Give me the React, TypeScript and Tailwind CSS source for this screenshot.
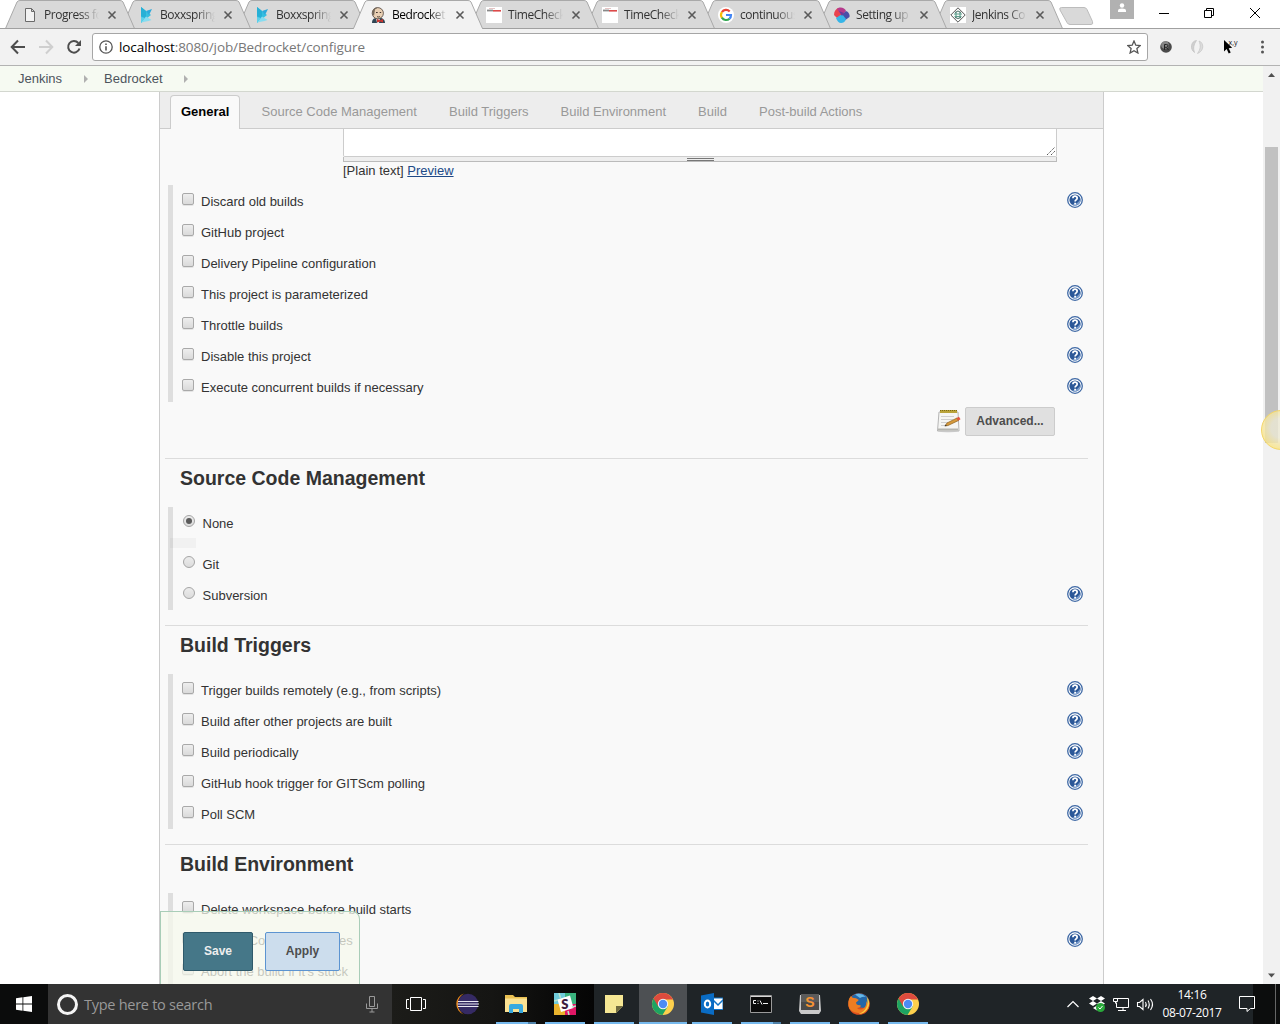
import React from 'react';

type IconProps = { children: React.ReactNode; w: number; h: number; className?: string };

function Svg({ children, w, h, className = '' }: IconProps) {
  return (
    <svg width={w} height={h} viewBox={`0 0 ${w} ${h}`} fill="none" className={`shrink-0 ${className}`}>
      {children}
    </svg>
  );
}

/* ---------- favicons ---------- */

const DocIcon = () => (
  <Svg w={16} h={16}>
    <path d="M3.500 1.500h6l3 3v10h-9z M9.500 1.500v3h3" fill="#f2f2f2" stroke="#6a6a6a" />
  </Svg>
);
const BoxxIcon = () => (
  <Svg w={16} h={16}>
    <path d="M3 0l10 8-10 8z" fill="#35bfe0" />
    <path d="M3 0l5 4v8l-5-3z" fill="#27b0d6" />
    <path d="M8 4l6-2-3 6z" fill="#2ca9dc" />
    <path d="M3 15.500l5-6 5.500 3.500-3 1z" fill="#86dcf0" />
    <path d="M3 15.500V10l4 1z" fill="#5fd0ea" />
  </Svg>
);
const ButlerIcon = () => (
  <Svg w={16} h={16}>
    <path d="M2 16c0-4 2-5 5-5h3c3 0 5 2 5 5z" fill="#2f4553" />
    <path d="M6 11h4l-1 5H7z" fill="#e8e8e8" />
    <ellipse cx="7.800" cy="6.200" rx="5.600" ry="5.600" fill="#e9d0b4" stroke="#4d4039" strokeWidth=".8" />
    <path d="M2.500 7C1.500 2 5 .3 8 .4L5 2.500 4 9z" fill="#75695c" />
    <path d="M6 5.500h1.700M9.700 5.500h1.500M7 9.500c1 .7 2 .6 3 0" stroke="#40342e" />
    <path d="M7 12l3 1.300L13 12v3.500l-3-1-3 1z" fill="#c9352f" />
  </Svg>
);
const TimeIcon = () => (
  <Svg w={16} h={16}>
    <path d="M0 0h16v16H0z" fill="#fff" />
    <path d="M1 3.500h6" stroke="#888" strokeWidth="1.800" />
    <path d="M7 3.800h8" stroke="#dc4a4a" strokeWidth="1.600" />
    <path d="M3 1.500h6" stroke="#e6c4c4" />
  </Svg>
);
const GoogleIcon = () => (
  <Svg w={16} h={16}>
    <circle cx="8" cy="8" r="8" fill="#fff" />
    <path d="M3.900 5.200A5 5 0 0 1 11.700 4.400" stroke="#ea4335" strokeWidth="2.200" />
    <path d="M3.900 10.800a5 5 0 0 1 0-5.600" stroke="#fbbc05" strokeWidth="2.200" />
    <path d="M11.500 11.700a5 5 0 0 1-7.600-1" stroke="#34a853" strokeWidth="2.200" />
    <path d="M8 8h5a5 5 0 0 1-1.600 3.800" stroke="#4285f4" strokeWidth="2.200" />
  </Svg>
);
const SwirlIcon = () => (
  <Svg w={16} h={16}>
    <path d="M0 8C0 4 2 2 4 1l5 6-5 5z" fill="#e9434e" />
    <path d="M3 2c3-3 8-1 9 2L8 9z" fill="#b53a8c" />
    <path d="M8 8l4-4c3 1 4 4 3.500 6L10 14z" fill="#4a4fa8" />
    <path d="M2 11l6-4 4 5c-1 3-3 4-5 4s-4-2-5-5z" fill="#35b5e8" />
    <path d="M5 4l5 2-2 3z" fill="#6e3a98" />
  </Svg>
);
const DiamondIcon = () => (
  <Svg w={16} h={16}>
    <path d="M0 0h16v16H0z" fill="#fff" />
    <path d="M8 .8L15.200 8 8 15.200.8 8z" fill="#f8faf9" stroke="#555" />
    <path d="M4 7h8M4.500 9.500h7M6 5v6M10 5v6" stroke="#5f9f8d" strokeWidth="1.200" />
    <path d="M5 5.500q3-3 6 0M5 10.500q3 2 6 0" stroke="#4b6f66" />
  </Svg>
);

/* ---------- browser window ---------- */

type BrowserTab = { title: string; icon: React.ReactNode; z: string; active?: boolean };

const browserTabs: BrowserTab[] = [
  { title: 'Progress fo', icon: <DocIcon />, z: 'z-[9]' },
  { title: 'Boxxspring', icon: <BoxxIcon />, z: 'z-[8]' },
  { title: 'Boxxspring', icon: <BoxxIcon />, z: 'z-[7]' },
  { title: 'Bedrocket', icon: <ButlerIcon />, z: 'z-20', active: true },
  { title: 'TimeCheck', icon: <TimeIcon />, z: 'z-[5]' },
  { title: 'TimeCheck', icon: <TimeIcon />, z: 'z-[4]' },
  { title: 'continuous', icon: <GoogleIcon />, z: 'z-[3]' },
  { title: 'Setting up', icon: <SwirlIcon />, z: 'z-[2]' },
  { title: 'Jenkins Co', icon: <DiamondIcon />, z: 'z-[1]' },
];

function ChromeTab({ title, icon, z, active }: BrowserTab) {
  const fill = active ? '#f2f2f2' : '#d9d9d9';
  return (
    <div className={`relative flex h-[29px] w-[116px] shrink-0 items-center pl-4 ${z}`}>
      <svg width="130" height="29" className="absolute top-0 left-[-1px]" fill="none">
        <path d="M0.500 28.500L12 2Q13 .5 15 .5H115Q117 .5 118 2L129.500 28.500" fill={fill} stroke="#a9a9a9" />
        <path d={active ? 'M1 28.500H129' : 'M0 28.500H130'} stroke={active ? '#f2f2f2' : '#a0a0a0'} />
      </svg>
      <span className="relative flex">{icon}</span>
      <span
        className={`relative ml-1.5 w-[55px] text-[12px] leading-4 tracking-[-0.45px] whitespace-nowrap [mask-image:linear-gradient(to_right,black_66%,transparent)] ${active ? 'text-black' : 'text-[#333]'}`}
      >
        {title}
      </span>
      <Svg w={10} h={10} className="relative ml-2">
        <path d="M1.500 1.500l7 7M8.500 1.500l-7 7" stroke="#5a5a5a" strokeWidth="1.600" />
      </Svg>
    </div>
  );
}

function TabStrip() {
  return (
    <div className="flex h-[29px] shrink-0 bg-white shadow-[inset_0_-1px_0_#a0a0a0]">
      <div className="flex pl-1.5">
        {browserTabs.map((t, i) => (
          <ChromeTab key={i} {...t} />
        ))}
      </div>
      <Svg w={36} h={29} className="ml-2">
        <path d="M3.500 7.500H26q2 0 3 2l5.500 12q1 3-1.500 3H12q-2 0-3-2L2 10q-1-2.500 1.500-2.500z" fill="#d9d9d9" stroke="#bcbcbc" />
      </Svg>
      <Svg w={24} h={19} className="ml-4">
        <path d="M0 0h24v19H0z" fill="#b1b1b1" />
        <circle cx="12" cy="5.500" r="2.200" fill="#fff" />
        <path d="M8 12v-1.500q0-2 4-2t4 2V12z" fill="#fff" />
      </Svg>
      <Svg w={126} h={29} className="ml-5">
        <path d="M5 13.500h10" stroke="#000" />
        <path d="M50.500 10.500h7v7h-7zM52.500 10.500v-2h7v7h-2M96 8l10 10M106 8L96 18" stroke="#000" />
      </Svg>
    </div>
  );
}

function Toolbar() {
  return (
    <div className="flex h-[37px] shrink-0 items-center border-b border-[#b3b3b3] bg-[#f2f2f2]">
      <Svg w={92} h={36}>
        <path d="M25 18H12M18 11.500L11.700 18l6.300 6.500" stroke="#4d4d4d" strokeWidth="2" />
        <path d="M39 18h13M46 11.500l6.300 6.500-6.300 6.500" stroke="#cfcfcf" strokeWidth="2" />
        <path d="M78.300 14A5.800 5.800 0 1 0 79.500 19.500" stroke="#4d4d4d" strokeWidth="2" />
        <path d="M81 11v6h-6z" fill="#4d4d4d" />
      </Svg>
      <div className="flex h-7 w-[1056px] items-center rounded-[3px] border border-[#a6a6a6] bg-white">
        <Svg w={14} h={14} className="ml-[6px]">
          <circle cx="7" cy="7" r="6.200" stroke="#555" strokeWidth="1.300" />
          <path d="M7 6.200v4.300M7 3.500V5" stroke="#555" strokeWidth="1.600" />
        </Svg>
        <span className="ml-[6px] text-[13.5px] tracking-[-0.09px] whitespace-nowrap text-[#777]">
          <span className="text-black">localhost</span>:8080/job/Bedrocket/configure
        </span>
        <Svg w={14} h={14} className="mr-1.5 ml-auto">
          <path d="M7 1l1.800 4.200 4.500.4-3.400 3 1 4.400L7 10.700 3.100 13l1-4.400-3.400-3 4.500-.4z" stroke="#555" strokeWidth="1.300" />
        </Svg>
      </div>
      <Svg w={132} h={36}>
        <circle cx="18" cy="18" r="5.800" fill="#4a4a4a" />
        <circle cx="17" cy="16" r="3.800" fill="#858585" />
        <path d="M16.500 21v-5.500h2q1.500 0 1.500 1.400T18.500 18.300h-2M18.500 18.500L20.500 21" stroke="#222" />
        <path d="M48.500 11.500C43 12 41.500 20 46.500 23.500c-1.500-4-1-8 2-12z" fill="#d0d0d0" stroke="#c4c4c4" strokeWidth=".8" />
        <path d="M51 12c5 1.500 5.500 10-1.500 12.500 3-4 3.500-8 1.500-12.500z" fill="#dcdcdc" stroke="#c8c8c8" strokeWidth=".8" />
        <path d="M76 11v11.500l2.700-2.500 2 4.500 2-1-2-4.300 3.500-.4z" fill="#000" />
        <text x="80.500" y="15.500" fontSize="7" fill="#111" className="font-['Open_Sans',sans-serif]">x,y</text>
        <circle cx="114.500" cy="13" r="1.500" fill="#555" />
        <circle cx="114.500" cy="18" r="1.500" fill="#555" />
        <circle cx="114.500" cy="23" r="1.500" fill="#555" />
      </Svg>
    </div>
  );
}

/* ---------- Jenkins page ---------- */

const CrumbArrow = () => (
  <Svg w={4} h={8}>
    <path d="M0 0l4 4-4 4z" fill="#b0b0b0" />
  </Svg>
);

function Breadcrumbs() {
  return (
    <div className="flex h-[26px] shrink-0 items-center border-b border-[#d3d7cf] bg-[#f6faf2] pl-[18px] text-[#4d545d]">
      <span className="w-[66px]">Jenkins</span>
      <CrumbArrow />
      <span className="ml-4 w-20">Bedrocket</span>
      <CrumbArrow />
    </div>
  );
}

const HelpIcon = () => (
  <Svg w={16} h={16} className="mr-5 ml-auto -translate-y-px">
    <circle cx="8" cy="8" r="7.300" fill="#fff" stroke="#3f69a5" strokeWidth="1.300" />
    <circle cx="8" cy="8" r="5.600" fill="#2c5898" />
    <path d="M13.500 7A5.600 5.600 0 0 1 5 12.700Q11 12 13.500 7z" fill="#7c9ecd" />
    <path d="M5.900 6.200Q6 4.200 8 4.200t2.200 1.900Q10.200 7.200 9 7.900 8.100 8.400 8.100 9.600" stroke="#fff" strokeWidth="1.700" />
    <path d="M7.200 10.700h1.800v1.700H7.200z" fill="#fff" />
  </Svg>
);

type RowData = { label: string; help?: boolean; kind?: 'radio'; checked?: boolean };

function Row({ label, help, kind, checked }: RowData) {
  return (
    <div className="flex h-[31px] items-center">
      {kind === 'radio' ? (
        <span className="mt-[-3px] ml-2.5 flex size-3 items-center justify-center rounded-full border border-[#a5a5a5] bg-linear-to-b from-[#ececec] to-[#dcdcdc]">
          {checked && <span className="size-1.5 rounded-full bg-[#5a5a5a]" />}
        </span>
      ) : (
        <span className="mt-[-3px] ml-[9px] size-3 rounded-[2px] border border-[#a9a9a9] bg-linear-to-b from-[#eeeeee] to-[#dadada] shadow-[0_1px_0_#e4e4e4]" />
      )}
      <span className={kind === 'radio' ? 'ml-[7.5px] pt-0.5' : 'ml-[7px] pt-0.5'}>{label}</span>
      {help && <HelpIcon />}
    </div>
  );
}

function Group({ rows }: { rows: RowData[] }) {
  return (
    <div className="ml-2 border-l-[5px] border-[#dedede]">
      {rows.map((r) => (
        <Row key={r.label} {...r} />
      ))}
    </div>
  );
}

function Section({ title, children }: { title: string; children: React.ReactNode }) {
  return (
    <section className="mb-[15px] shrink-0">
      <div className="mr-[15px] ml-[5px] h-px bg-[#dcdcdc]" />
      <h2 className="h-12 pt-[7px] pl-5 text-[19.5px] leading-6 font-bold">{title}</h2>
      {children}
    </section>
  );
}

const generalRows: RowData[] = [
  { label: 'Discard old builds', help: true },
  { label: 'GitHub project' },
  { label: 'Delivery Pipeline configuration' },
  { label: 'This project is parameterized', help: true },
  { label: 'Throttle builds', help: true },
  { label: 'Disable this project', help: true },
  { label: 'Execute concurrent builds if necessary', help: true },
];

const triggerRows: RowData[] = [
  { label: 'Trigger builds remotely (e.g., from scripts)', help: true },
  { label: 'Build after other projects are built', help: true },
  { label: 'Build periodically', help: true },
  { label: 'GitHub hook trigger for GITScm polling', help: true },
  { label: 'Poll SCM', help: true },
];

const environmentRows: RowData[] = [
  { label: 'Delete workspace before build starts' },
  { label: 'Provide Configuration files', help: true },
  { label: "Abort the build if it's stuck" },
];

const NotepadIcon = () => (
  <Svg w={24} h={24}>
    <ellipse cx="11" cy="22" rx="10" ry="1.500" fill="#ddd" />
    <path d="M2 3h19l1 19H0.500z" fill="#f5f5f3" stroke="#b5b5b5" />
    <path d="M1 19.500h20v2H1z" fill="#b5b5b0" />
    <path d="M3 1h17v3H3z" fill="#b9a33a" />
    <path d="M3 1.500h17" stroke="#7d6a13" strokeDasharray="1 1" />
    <path d="M4 7.500h13M4 10.500h12M4 13.500h7M4 16.500h5" stroke="#cfcfcf" />
    <path d="M8 17l2-3 10-5 1.500 2.500L11 16.500z" fill="#d69a3c" stroke="#8c5f1c" strokeWidth=".7" />
    <path d="M19.500 9l2.500-1.200 1.500 2.500-2.500 1.400z" fill="#e2533f" />
    <path d="M7.500 17.200l1.300-1.700 1 1.200z" fill="#333" />
  </Svg>
);

function ConfigTabs() {
  return (
    <nav className="flex h-[37px] shrink-0 border-b border-[#ccc] bg-[#ededed] pt-[3px] text-[#999]">
      <span className="ml-2.5 h-[34px] w-[70px] rounded-t-[4px] border border-b-0 border-[#ccc] bg-[#f9f9f9] pt-[7px] pl-2.5 font-bold text-black">General</span>
      <div className="flex pt-2">
        <span className="ml-[21.5px] w-[187.5px]">Source Code Management</span>
        <span className="w-[111.5px]">Build Triggers</span>
        <span className="w-[137.5px]">Build Environment</span>
        <span className="w-[61px]">Build</span>
        <span>Post-build Actions</span>
      </div>
    </nav>
  );
}

function ConfigPanel() {
  return (
    <main className="relative ml-[159px] flex h-[892px] w-[945px] flex-col overflow-hidden border-x border-[#ccc] bg-[#f9f9f9]">
      <ConfigTabs />
      <div className="ml-[183px] w-[714px] shrink-0">
        <div className="flex h-7 items-end justify-end rounded-b-[2px] border border-t-0 border-[#ccc] bg-white">
          <Svg w={10} h={10}>
            <path d="M1 9l8-8M5 9l4-4" stroke="#555" strokeDasharray="1.400 .8" />
          </Svg>
        </div>
        <div className="flex h-[5px] items-center justify-center border border-t-0 border-[#bbb] bg-[#eee]">
          <span className="h-[3px] w-[27px] border-y border-[#777]" />
        </div>
        <p className="h-6 leading-[17px]">
          [Plain text] <span className="text-[#204a87] underline">Preview</span>
        </p>
      </div>
      <div className="mt-[-1px] shrink-0">
        <Group rows={generalRows} />
      </div>
      <div className="flex h-14 shrink-0 items-start justify-end gap-1 pt-[5px] pr-12">
        <span className="pt-0.5"><NotepadIcon /></span>
        <button className="h-[29px] w-[90px] rounded-[2px] border border-[#ccc] bg-[#e0e0e0] pb-0.5 text-[12px] font-bold text-[#4d4d4d]">Advanced...</button>
      </div>
      <Section title="Source Code Management">
        <div className="ml-2 border-l-[5px] border-[#dedede]">
          <Row label="None" kind="radio" checked />
          <div className="-ml-[3px] h-2.5 w-[26px] bg-black/[0.03]" />
          <Row label="Git" kind="radio" />
          <Row label="Subversion" kind="radio" help />
        </div>
      </Section>
      <Section title="Build Triggers">
        <Group rows={triggerRows} />
      </Section>
      <Section title="Build Environment">
        <Group rows={environmentRows} />
      </Section>
      <div className="absolute bottom-0 left-0 flex h-[73px] w-[200px] rounded-tr-[8px] border border-b-0 border-[#a9cdb8] bg-[#f5f8ec]/75 pt-5 pl-[22px]">
        <button className="h-[39px] w-[70px] rounded-[2px] border border-[#2f5a6b] bg-[#457788] pb-0.5 text-[12px] font-bold text-[#eee]">Save</button>
        <button className="ml-3 h-[39px] w-[75px] rounded-[2px] border border-[#5c94d1] bg-[#ccdded] pb-0.5 text-[12px] font-bold text-[#4d4d4d]">Apply</button>
      </div>
    </main>
  );
}

function Scrollbar() {
  return (
    <div className="flex w-[17px] shrink-0 flex-col items-center bg-[#f1f1f1]">
      <Svg w={17} h={17}><path d="M5 11l3.500-4 3.500 4z" fill="#505050" /></Svg>
      <div className="mt-16 h-[296px] w-[13px] bg-[#c1c1c1]" />
      <Svg w={17} h={17} className="mt-auto"><path d="M5 6.500l3.500 4 3.500-4z" fill="#505050" /></Svg>
    </div>
  );
}

/* ---------- Windows taskbar ---------- */

const ChromeLogo = () => (
  <Svg w={22} h={22}>
    <circle cx="11" cy="11" r="11" fill="#fdd04d" />
    <path d="M11 11L1.500 5.500A11 11 0 0 0 10.500 22L16 13z" fill="#1da462" />
    <path d="M1.500 5.500L6.300 13.700 10 6.500h11L20.500 5.500A11 11 0 0 0 1.500 5.500z" fill="#dd4b3e" />
    <circle cx="11" cy="11" r="5.200" fill="#f5f5f5" />
    <circle cx="11" cy="11" r="4.200" fill="#4c8bf5" />
  </Svg>
);
const EclipseLogo = () => (
  <Svg w={26} h={22}>
    <path d="M10 .5A11 11 0 0 0 10 21.500Q4 18 4 11T10 .5z" fill="#ef8c1c" />
    <circle cx="14" cy="11" r="10.300" fill="#352a63" />
    <path d="M4 8.500h20.500M3.500 11h21.500M4 13.500h20.500" stroke="#e9e7f2" strokeWidth="1.200" />
  </Svg>
);
const FolderLogo = () => (
  <Svg w={22} h={20}>
    <path d="M0 1h8l2 2h12v15H0z" fill="#e9c052" />
    <path d="M0 4.500h22V18H0z" fill="#fbe293" />
    <path d="M4 12q0-2 2-2h10q2 0 2 2v7h-4v-4H8v4H4z" fill="#38a9e0" />
  </Svg>
);
const SlackLogo = () => (
  <Svg w={22} h={22}>
    <path d="M0 0h11v11H0z" fill="#6fcbdb" />
    <path d="M11 0h11v11H11z" fill="#3ab37e" />
    <path d="M0 11h11v11H0z" fill="#e9b32d" />
    <path d="M11 11h11v11H11z" fill="#e01765" />
    <path d="M3.500 6.500l12.500-4 3.500 12.500-12.500 4z" fill="#fff" />
    <text x="7.200" y="15.500" fontSize="13" fontWeight="800" fill="#3f1d40" className="font-['Lato',sans-serif]">S</text>
    <path d="M5 0l1.500 5M0 8l4-1M22 13l-4 1M15 22l-1-4" stroke="#b9e6cf" strokeWidth="1.500" />
  </Svg>
);
const NoteLogo = () => (
  <Svg w={18} h={18}>
    <path d="M0 0h18v11l-7 7H0z" fill="#f5e794" />
    <path d="M11 11h7l-7 7z" fill="#6e693f" />
  </Svg>
);
const OutlookLogo = () => (
  <Svg w={22} h={22}>
    <path d="M12 5h10v11.500H12z" fill="#fff" stroke="#0f72c6" />
    <path d="M12 7l5 5 5-5" stroke="#0f72c6" strokeWidth="1.500" />
    <path d="M0 2.500L13 0v22L0 19.500z" fill="#0a6cc4" />
    <ellipse cx="6.500" cy="11" rx="2.700" ry="3.500" stroke="#fff" strokeWidth="2" />
  </Svg>
);
const CmdLogo = () => (
  <Svg w={22} h={18} className="-ml-px">
    <path d="M.5.5h21v17H.5z" fill="#0a0a0a" stroke="#9a9a9a" />
    <path d="M1 1.500h20" stroke="#d8d8d8" />
    <path d="M6 5.500H3.500v3H6M8 5.500v1M8 8v1M10 5.500l2 4M13 8.500h5" stroke="#eee" />
  </Svg>
);
const SublimeLogo = () => (
  <Svg w={22} h={22}>
    <path d="M1 2h20l1 16-2 3H2l-2-3z" fill="#c9c9c9" />
    <path d="M2 1h18v16H2z" fill="#4a4a4a" />
    <path d="M2 1h18v8H2z" fill="#5b5b5b" />
    <text x="6.200" y="14" fontSize="14" fontWeight="700" fill="#f79433" className="font-['Liberation_Sans',sans-serif]">S</text>
  </Svg>
);
const FirefoxLogo = () => (
  <Svg w={22} h={22}>
    <circle cx="11" cy="11" r="10.800" fill="#e0501d" />
    <path d="M3 4Q8-1.500 15 1q5 2 6 7l-4 7-9-1z" fill="#2467a8" />
    <path d="M7 1.500Q13-1 18 4q-3-1-6 1z" fill="#66b9e8" />
    <path d="M1 6Q2 4 3 3q1 2 3 2 3 0 3 1 2 0 1.500 1.500L8 9.500q0 2 2 2.500 3 0 3 1-1 2-4 2 3 3 7 0 3-3 2-7 3 4 1 8-3 5-9 4Q2 19 .5 13 0 9 1 6z" fill="#ee7d22" />
    <path d="M18.500 3.500q5 6 1 12.500-3 5-9 5 6-2 8-7t0-10.500z" fill="#fccb3d" />
  </Svg>
);

function TaskItem({ children, line = true, grouped }: { children: React.ReactNode; line?: boolean; grouped?: boolean }) {
  return (
    <div className="mr-[9px] flex h-10 w-10 shrink-0 flex-col items-center">
      <div className="flex h-[38px] items-center pt-0.5">{children}</div>
      {line && (
        <div className="flex h-0.5 w-full bg-[#76b9ed]">
          {grouped && <span className="ml-auto w-2 bg-[#4f81a8]" />}
        </div>
      )}
    </div>
  );
}

function Taskbar() {
  return (
    <footer className="flex h-10 shrink-0 bg-[#1f2427] text-white">
      <div className="flex w-12 items-center justify-center bg-[#0b0c0c]">
        <Svg w={16} h={16}>
          <path d="M0 2.200l6.500-.9v6.200H0zM7.300 1.200L16 0v7.500H7.300zM0 8.400h6.500v6.300L0 13.800zM7.300 8.400H16V16l-8.700-1.200z" fill="#fff" />
        </Svg>
      </div>
      <div className="flex w-[344px] items-center bg-[#333] pl-[9px]">
        <span className="size-[21px] rounded-full border-[3px] border-[#f4f4f4]" />
        <span className="ml-1.5 pt-0.5 text-[14.5px] tracking-[-0.27px] whitespace-nowrap text-[#999]">Type here to search</span>
        <Svg w={12} h={17} className="mr-3.5 ml-auto">
          <path d="M3.500.5h5v10h-5zM.5 7.500v5h11v-5M6 12.500v3.500M3.500 16h5" stroke="#9a9a9a" />
        </Svg>
      </div>
      <div className="flex w-[202px] bg-linear-to-r from-[#1c1c19] via-[#151513] to-[#050505]">
        <div className="mr-[7px] flex w-12 items-center justify-center">
          <Svg w={20} h={16}>
            <path d="M4.500 1.500h11v13h-11zM3 3.500H.5v9H3M17 3.500h2.500v9H17" stroke="#fff" />
          </Svg>
        </div>
        <TaskItem line={false}><EclipseLogo /></TaskItem>
        <TaskItem grouped><FolderLogo /></TaskItem>
        <TaskItem><SlackLogo /></TaskItem>
      </div>
      <TaskItem><NoteLogo /></TaskItem>
      <div className="mr-[5px] -ml-1 flex w-12 flex-col items-center bg-[#4d5053]">
        <div className="flex h-[38px] items-center pt-0.5"><ChromeLogo /></div>
        <div className="h-0.5 w-full bg-[#76b9ed]" />
      </div>
      <TaskItem><OutlookLogo /></TaskItem>
      <TaskItem grouped><CmdLogo /></TaskItem>
      <TaskItem><SublimeLogo /></TaskItem>
      <TaskItem><FirefoxLogo /></TaskItem>
      <TaskItem><ChromeLogo /></TaskItem>
      <Svg w={90} h={40} className="ml-[129px]">
        <path d="M1.500 23l5.500-5.500 5.500 5.500" stroke="#fff" strokeWidth="1.200" />
        <g fill="#fff">
          <path d="M23 14.500l4-2.500 4 2.500-4 2.500zM31 14.500l4-2.500 4 2.500-4 2.500zM23 19.500l4-2.500 4 2.500-4 2.500zM31 19.500l4-2.500 4 2.500-4 2.500zM27 24l4-2.500 4 2.500-4 2.500z" />
        </g>
        <circle cx="34.500" cy="23.500" r="4.500" fill="#29a83a" />
        <path d="M32.500 23.500l1.500 1.500 2.500-3" stroke="#fff" />
        <path d="M51 14.500h11.500v9H50.500v-5M57 23.500v3M52 26.500h8M47.500 14.500h4v3h-4zM49.500 17.500v2" stroke="#fff" />
        <path d="M71.500 18.500h2l3.500-3v10l-3.500-3h-2zM79.500 18q1.500 2.500 0 5M82 16.500q2.500 4 0 8M84.500 15q4 5.500 0 11" stroke="#fff" strokeWidth="1.100" />
      </Svg>
      <div className="ml-[3px] flex w-[66px] shrink-0 flex-col items-center pt-[2px] text-[12px] leading-[18px] tracking-[-0.35px] whitespace-nowrap">
        <span>14:16</span>
        <span>08-07-2017</span>
      </div>
      <Svg w={18} h={40} className="relative ml-[13px]">
        <path d="M1.500 12.500h15v12h-4l-3.500 3v-3h-7.500z" stroke="#fff" />
      </Svg>
      <div className="-ml-[3px] flex flex-1 bg-[#0c0d0d]">
        <span className="ml-auto mr-1 w-px bg-[#666]" />
      </div>
    </footer>
  );
}

export default function App() {
  return (
    <div className="relative flex h-[1024px] w-[1280px] flex-col overflow-hidden bg-white font-['Open_Sans','Noto_Sans',sans-serif]">
      <TabStrip />
      <Toolbar />
      <div className="flex h-[918px] shrink-0 font-['Liberation_Sans',sans-serif] text-[13px] leading-[18px] text-[#333]">
        <div className="flex w-[1263px] flex-col">
          <Breadcrumbs />
          <ConfigPanel />
        </div>
        <Scrollbar />
      </div>
      <Taskbar />
      <div className="absolute top-[410px] left-[1261px] size-10 rounded-full border border-[#f3d66a] bg-[radial-gradient(circle_at_50%_45%,#ece9d4cc_35%,#fbe480cc_75%)]" />
    </div>
  );
}
